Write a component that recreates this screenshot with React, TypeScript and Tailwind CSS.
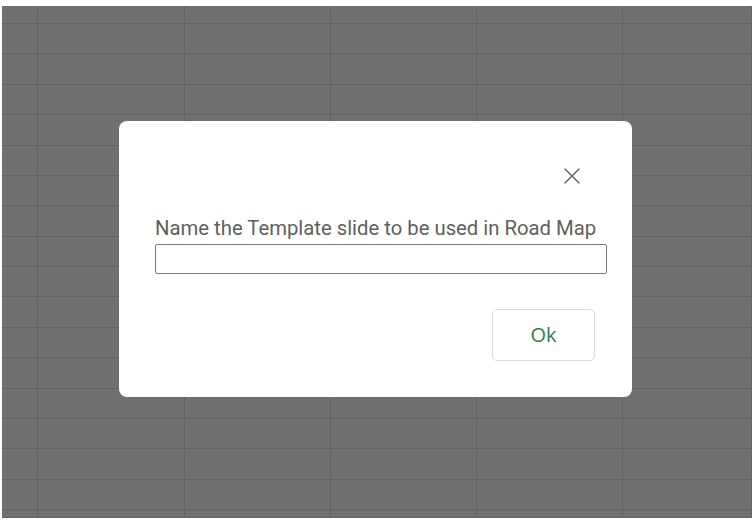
import { X } from 'lucide-react'

const cells = Array.from({ length: 18 * 6 }, (_, i) => i)

export default function App() {
  return (
    <div className="w-[752px] h-[528px] bg-white pt-[6px] pl-[2px] pb-[10px] overflow-hidden">
      <div className="relative h-full bg-[#707070]">
        {/* sheet grid under the overlay */}
        <div className="grid h-full grid-cols-[36px_147px_146px_146px_146px_1fr] grid-rows-[18px_repeat(16,30.375px)_1fr]">
          {cells.map((i) => (
            <div key={i} className="border-r border-b border-[#636363]" />
          ))}
        </div>

        {/* dialog */}
        <div className="absolute left-[117px] top-[115px] w-[513px] h-[276px] bg-white rounded-lg flex flex-col pl-[36px] pr-[37px]">
          <div className="flex justify-end pt-[41px] pr-[9px]">
            <button className="text-[#6b6b6b]">
              <X size={28} strokeWidth={1.3} />
            </button>
          </div>
          <label className="mt-[26px] text-[20.3px] leading-[24px] text-[#606060] font-['Roboto',sans-serif] whitespace-nowrap">
            Name the Template slide to be used in Road Map
          </label>
          <input
            type="text"
            className="mt-[4px] w-[452px] h-[30px] border border-[#7a7a7a] rounded-[2px] outline-none"
          />
          <div className="flex justify-end mt-[35px]">
            <button className="w-[103px] h-[52px] border border-[#dadce0] rounded-[5px] text-[20px] text-[#2f7a50] font-['Open_Sans',sans-serif]">
              Ok
            </button>
          </div>
        </div>
      </div>
    </div>
  )
}
